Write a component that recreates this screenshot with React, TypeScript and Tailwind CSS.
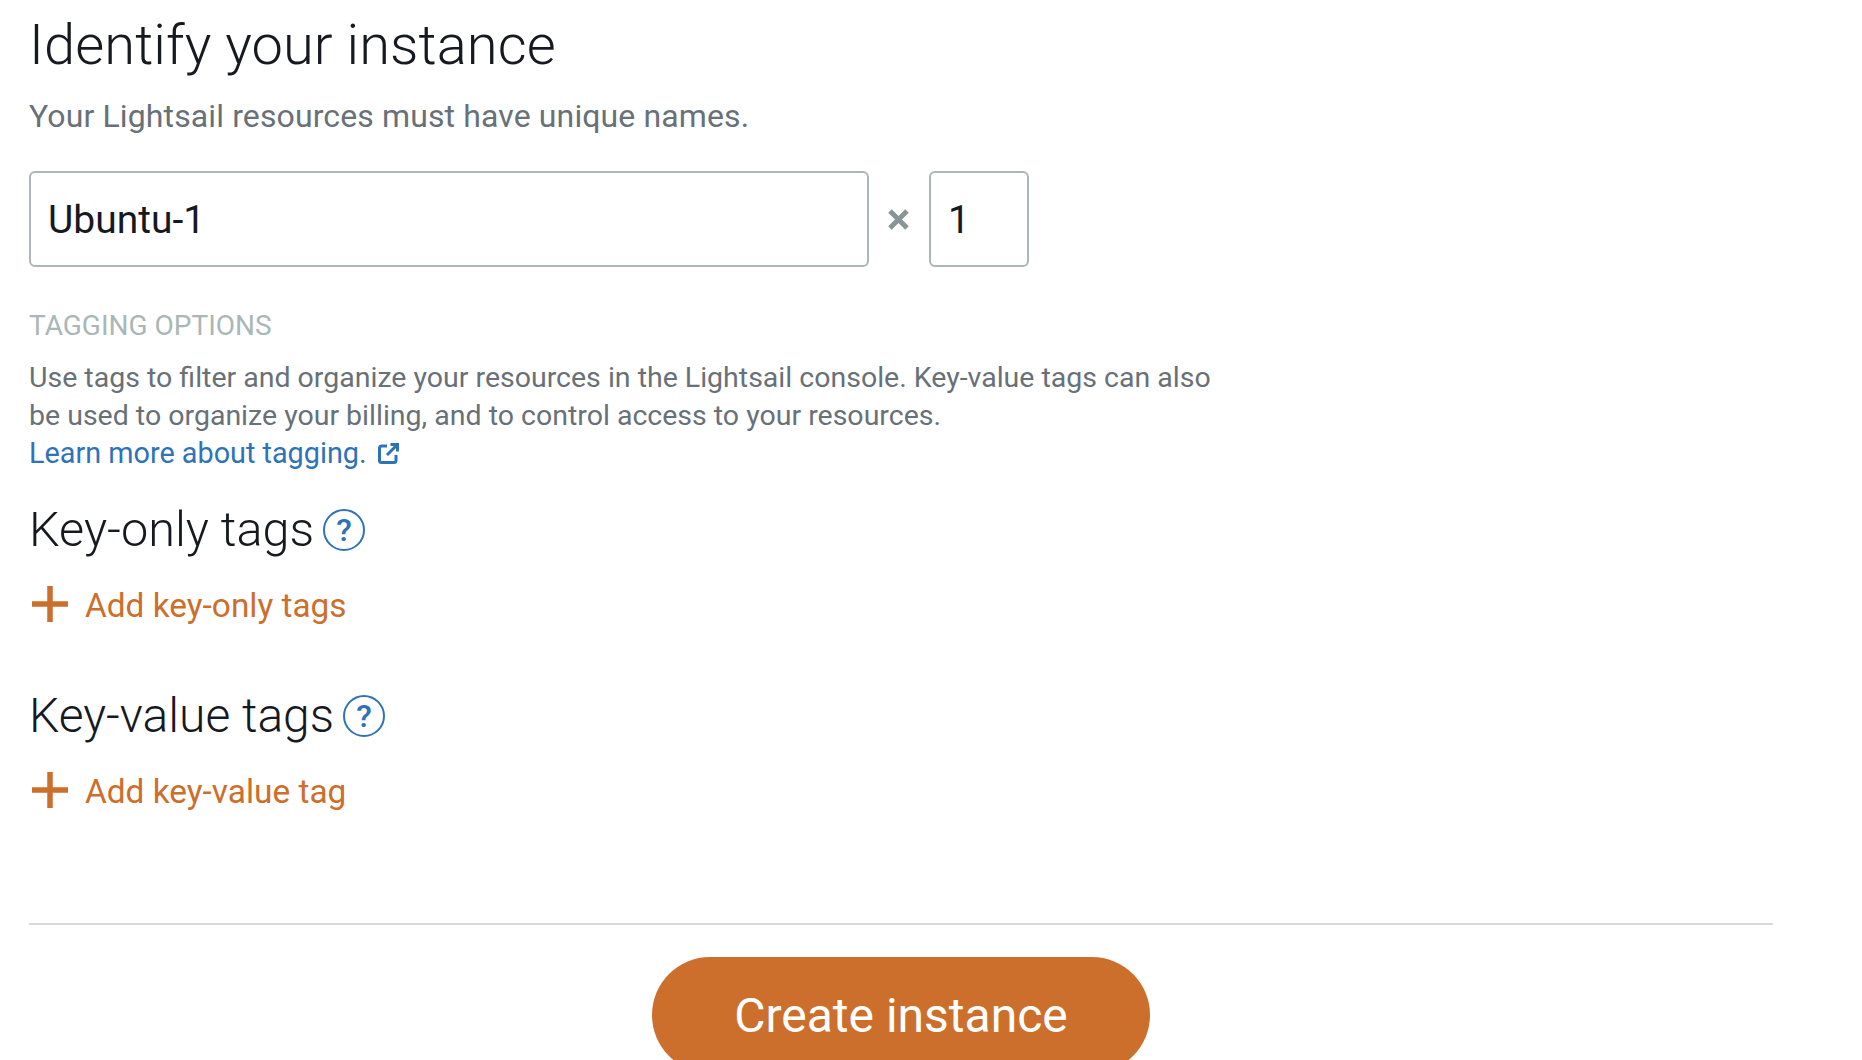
function HelpIcon() {
  return (
    <span className="ml-[9px] flex h-[42px] w-[42px] items-center justify-center rounded-full border-2 border-[#2e73b8] text-[32px] font-medium leading-none text-[#2e73b8]">
      ?
    </span>
  );
}

function AddLink({ label }: { label: string }) {
  return (
    <div className="flex h-[40px] items-center text-[#cc6f2d]">
      <svg viewBox="0 0 36 36" className="mb-[5px] ml-[3px] h-[36px] w-[36px] shrink-0">
        <path d="M0 18H36M18 0V36" stroke="currentColor" strokeWidth="5.5" fill="none" />
      </svg>
      <span className="ml-[17px] text-[33.4px] leading-none">{label}</span>
    </div>
  );
}

export default function App() {
  return (
    <div className="h-[1060px] overflow-hidden bg-white pl-[29px] pr-[89px] font-['Roboto','Noto_Sans',sans-serif] text-[#16191f]">
      <h1 className="pt-[12px] text-[56px] font-light leading-[66px] tracking-[0.1px]">Identify your instance</h1>
      <p className="mt-[18px] text-[32px] font-normal leading-[40px] tracking-[0.12px] text-[#687078]">
        Your Lightsail resources must have unique names.
      </p>

      <div className="mt-[35px] flex items-center">
        <div className="flex h-[96px] w-[840px] items-center rounded-[6px] border-2 border-[#aab7b8] pl-[17px] pt-[3px] text-[39px] leading-none">
          Ubuntu-1
        </div>
        <svg viewBox="0 0 21 21" className="ml-[19px] h-[21px] w-[21px] text-[#879596]">
          <path d="M2 2 19 19M19 2 2 19" stroke="currentColor" strokeWidth="5" fill="none" />
        </svg>
        <div className="ml-[20px] flex h-[96px] w-[100px] items-center rounded-[6px] border-2 border-[#aab7b8] pl-[17px] pt-[3px] text-[39px] leading-none">
          1
        </div>
      </div>

      <div className="mt-[43px] text-[28px] leading-[32px] text-[#aab7b8]">TAGGING OPTIONS</div>
      <p className="mt-[17px] w-[1215px] text-[28.5px] leading-[38px] text-[#687078]">
        Use tags to filter and organize your resources in the Lightsail console. Key-value tags can also be used to
        organize your billing, and to control access to your resources.
      </p>
      <a className="flex h-[37px] items-center text-[28.8px] leading-[37px] text-[#2e73b8]">
        Learn more about tagging.
        <svg viewBox="0 0 21 21" className="ml-[11px] h-[21px] w-[21px]" fill="none" stroke="currentColor" strokeWidth="3">
          <path d="M9 3H3.5A2 2 0 0 0 1.5 5V17.5A2 2 0 0 0 3.5 19.5H16A2 2 0 0 0 18 17.5V12" />
          <path d="M12.5 1.5H19.5V8.5M19.5 1.5 9 12" />
        </svg>
      </a>

      <div className="mt-[28px] flex items-center">
        <h2 className="text-[48.6px] font-light leading-[60px]">Key-only tags</h2>
        <HelpIcon />
      </div>
      <div className="mt-[26px]">
        <AddLink label="Add key-only tags" />
      </div>

      <div className="mt-[60px] flex items-center">
        <h2 className="text-[48px] font-light leading-[60px]">Key-value tags</h2>
        <HelpIcon />
      </div>
      <div className="mt-[26px]">
        <AddLink label="Add key-value tag" />
      </div>

      <div className="mt-[111px] border-t-2 border-[#d5dbdb]" />
      <div className="mt-[32px] flex justify-center">
        <button className="h-[116px] w-[498px] shrink-0 rounded-[58px] bg-[#cc6f2d] pt-[2px] text-[48px] font-normal text-white">
          Create instance
        </button>
      </div>
    </div>
  );
}
